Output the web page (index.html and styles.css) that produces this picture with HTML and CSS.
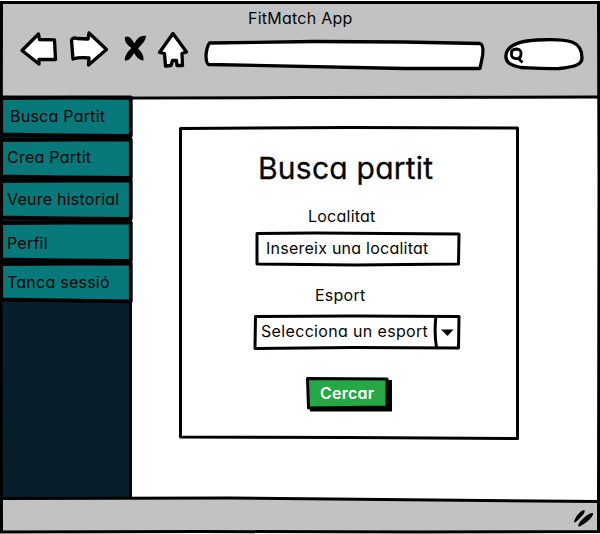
FILE: index.html
```html
<!DOCTYPE html>
<html lang="ca">
<head>
<meta charset="utf-8">
<title>FitMatch App</title>
<link rel="stylesheet" href="styles.css">
</head>
<body>
<div class="window">
  <svg class="frame" viewBox="0 0 600 534">
    <path class="bar" d="M1 2H598V98L1 96Z"/>
    <path class="bar" d="M1 498H230L598 501V531H1Z"/>
  </svg>
  <header class="toolbar">
    <div class="title"><span>FitMatch App</span></div>
    <nav class="controls">
      <svg class="back" viewBox="0 0 40 36"><path class="shape" d="M3 18.500L19.500 2L20.500 7.500L35.500 7.800L36.500 27.500L20 27.500V32Z"/></svg>
      <svg class="forward" viewBox="0 0 40 36"><path class="shape" d="M2.500 9Q4 6 8 7.500L19 8L20 2L37.500 18.500L19.500 34L20 27Q10 26 4 28Z"/></svg>
      <svg class="stop" viewBox="0 0 24 28"><path d="M2 3C6 1 9 5 11.500 9.500C14 4 18 1 23 2C23 7 18 11 15 14.500C19 18 21 22 20.500 26.500C15 26 13 22 11 19C8 24 5 28 1.500 26C2 21 5 17 8.500 14C4 11 1 7 2 3Z"/></svg>
      <svg class="home" viewBox="0 0 34 38"><path class="shape" d="M17 2.500L30.500 21L26 22.500L26.500 34.500H21L20.500 29.500H16.500L15 34.500L9.500 35L8.500 22.500L3.500 21.500Z"/></svg>
      <svg class="address" viewBox="0 0 284 32"><path class="shape" d="M5.500 3L110 1.500L200 2L276 3.500Q280 5 278.500 16L276 28.500H200L4.500 24.500Q2 23 2 15Q3 6 5.500 3Z"/></svg>
      <svg class="search" viewBox="0 0 84 36"><path class="shape" d="M3 18C4 8 17 4 34 3C51 2 63 3 69 5C77 8 79 14 79 21C79 28 71 30 56 31.500C40 32 29 31 18 30.500C8 28 2 26 3 18Z"/><path class="lens" d="M8.500 14.500Q10 12 14 12Q18.500 12.500 18 17Q18 21 15 21.500Q9 22 8.500 18ZM16 22L19.500 25.500"/></svg>
    </nav>
  </header>
  <main class="content">
    <aside class="sidebar">
      <a class="item item-first"><svg class="backdrop" viewBox="0 0 132 41.500"><path d="M1.200 0L70 -.5H130.800V37.800L60 37.300L1.200 36.500Z"/></svg><span>Busca Partit</span></a>
      <a class="item item-high"><svg class="backdrop" viewBox="0 0 132 41.500"><path d="M1.200 0L70 -.5H130.800V37.800L60 37.300L1.200 36.500Z"/></svg><span>Crea Partit</span></a>
      <a class="item"><svg class="backdrop" viewBox="0 0 132 41.500"><path d="M1.200 0L70 -.5H130.800V37.800L60 37.300L1.200 36.500Z"/></svg><span>Veure historial</span></a>
      <a class="item item-low"><svg class="backdrop" viewBox="0 0 132 41.500"><path d="M1.200 0L70 -.5H130.800V37.800L60 37.300L1.200 36.500Z"/></svg><span>Perfil</span></a>
      <a class="item"><svg class="backdrop" viewBox="0 0 132 41.500"><path d="M1.200 0L70 -.5H130.800V37.300L60 36.300L1.200 35.500Z"/></svg><span>Tanca sessió</span></a>
    </aside>
    <form class="card">
      <svg class="backdrop" viewBox="0 0 340 314"><path d="M1.500 2.500L170 1.500L338.500 2V312.500L170 311.500L1.500 311Z"/></svg>
      <h1>Busca partit</h1>
      <label>Localitat</label>
      <div class="input">
        <svg class="backdrop" viewBox="0 0 206 36"><path d="M2 2.500L60 2L204 3L203.500 33L100 34L2 33Z"/></svg>
        <span>Insereix una localitat</span>
      </div>
      <label class="sport">Esport</label>
      <div class="select">
        <svg class="backdrop" viewBox="0 0 208 36"><path d="M2.500 2.500L100 2L206 2.500L205.500 34L100 33.500L2 34.500ZM183 2Q181 18 183.500 34"/><path class="caret" d="M188 15.500H200.500L194.500 22Z"/></svg>
        <span>Selecciona un esport</span>
      </div>
      <button type="button" class="submit">
        <svg class="backdrop" viewBox="0 0 87 36"><path class="shadow" d="M5 4H87V35.500H5Z"/><path class="face" d="M2.500 2.500L82 3V31L3.500 32Z"/></svg>
        <span>Cercar</span>
      </button>
    </form>
  </main>
  <footer class="statusbar">
    <svg class="grip" viewBox="0 0 24 20"><path d="M3 14C4 9 9 3 13 2C16 3 10 10 4 14.500ZM7 18C8 13 17 5 22 5C23 9 13 17 8 18.500Z"/></svg>
  </footer>
  <svg class="frame lines" viewBox="0 0 600 534">
    <path d="M1.500 2.500H598.500L599 180L598.500 531.500L420 532L200 531.500L1.500 532L1 300Z"/>
    <path d="M1 97L130 98L300 97.500L599 97M1 498.500L230 498L599 501.500"/>
  </svg>
</div>
</body>
</html>
```
FILE: styles.css
```css
* { box-sizing: border-box; }
body {
  margin: 0;
  background: #fff;
  color: #050505;
  font: 16px/20px Inter, "Liberation Sans", sans-serif;
  font-feature-settings: "cv11";
  letter-spacing: .24px;
  white-space: nowrap;
}
svg { display: block; flex: none; overflow: visible; }
.window {
  position: relative;
  display: flex;
  flex-direction: column;
  width: 600px;
  height: 534px;
  overflow: hidden;
}
.frame { position: absolute; inset: 0; width: 600px; height: 534px; pointer-events: none; }
.bar { fill: #c2c2c2; }
.lines path { fill: none; stroke: #000; stroke-width: 3; }
.toolbar, .content, .statusbar { position: relative; }
.toolbar { height: 98px; padding-top: 8px; }
.title { display: flex; padding-left: 248px; }
.controls { display: flex; align-items: flex-start; padding-left: 19px; }
.shape { fill: #fff; stroke: #000; stroke-width: 3.300; stroke-linejoin: round; }
.back { width: 40px; height: 36px; margin-top: 4px; }
.forward { width: 40px; height: 36px; margin: 3px 0 0 10px; }
.stop { width: 24px; height: 28px; margin: 6px 0 0 14px; }
.home { width: 34px; height: 38px; margin: 3px 0 0 9px; }
.address { width: 284px; height: 32px; margin: 12px 0 0 14px; }
.search { width: 84px; height: 36px; margin: 9px 0 0 15px; }
.lens { fill: none; stroke: #000; stroke-width: 2.800; stroke-linejoin: round; }
.content { display: flex; align-items: flex-start; height: 400px; }
.sidebar { width: 132px; height: 400px; background: #061f2a; border-right: 3px solid #000; }
.backdrop { position: absolute; inset: 0; width: 100%; height: 100%; z-index: -1; }
.backdrop path { fill: #fff; stroke: #000; stroke-width: 3; stroke-linejoin: round; }
.item {
  position: relative;
  z-index: 0;
  display: block;
  width: 132px;
  height: 41.500px;
  padding: 8px 0 0 7px;
}
.item-first { padding-left: 10px; }
.item-high { padding-top: 7px; }
.item-low { padding-top: 10px; }
.item .backdrop path { fill: #07797b; stroke-width: 3.800; }
.card {
  position: relative;
  z-index: 0;
  width: 340px;
  height: 314px;
  margin: 28px 0 0 47px;
  display: flex;
  flex-direction: column;
}
h1 { margin: 24px 0 0 79px; font-size: 30px; line-height: 36px; font-weight: 400; height: 36px; -webkit-text-stroke: .3px; }
label { margin: 20px 0 0 129px; height: 20px; }
.input { position: relative; z-index: 0; width: 206px; height: 36px; margin: 5px 0 0 76px; padding: 7px 0 0 11px; }
.sport { margin: 18px 0 0 136px; }
.select { position: relative; z-index: 0; width: 208px; height: 36px; margin: 9px 0 0 74px; padding: 7px 0 0 8px; letter-spacing: .34px; }
.backdrop .caret { fill: #000; stroke: none; }
.submit {
  position: relative;
  z-index: 0;
  width: 87px;
  height: 36px;
  margin: 26px 0 0 126px;
  padding: 7px 0 0 15px;
  display: flex;
  border: 0;
  background: none;
  color: #fff;
  font: inherit;
  font-weight: 600;
  font-feature-settings: inherit;
  letter-spacing: inherit;
}
.submit .shadow { fill: #000; stroke: none; }
.submit .face { fill: #27a846; }
.statusbar { height: 36px; display: flex; justify-content: flex-end; padding: 10px 5px 0 0; }
.grip { width: 24px; height: 20px; }
```
